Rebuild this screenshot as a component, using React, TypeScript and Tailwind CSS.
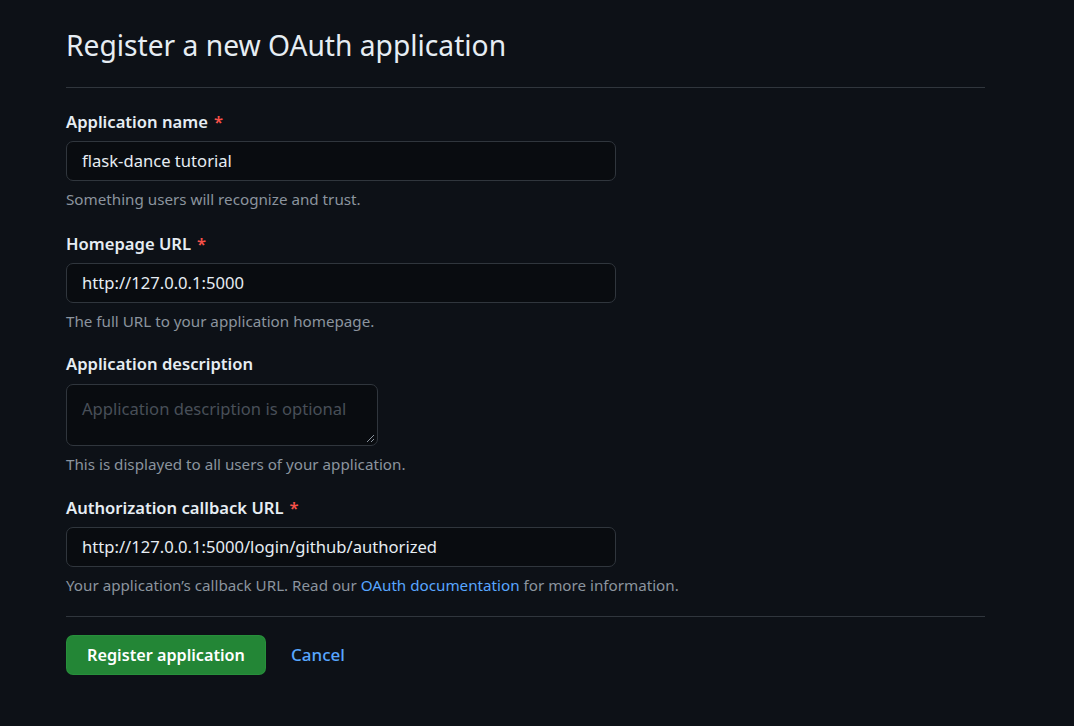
import React from "react";

const font = { fontFamily: '"Noto Sans", "Segoe UI", sans-serif' };

function Label({ text, required }: { text: string; required?: boolean }) {
  return (
    <div className="h-[20px] flex items-center text-[16.6px] font-semibold text-[#e6edf3]">
      {text}
      {required && <span className="ml-[6px] text-[#f85149]">*</span>}
    </div>
  );
}

function Note({ children }: { children: React.ReactNode }) {
  return (
    <div className="mt-[9px] h-[18px] flex items-center text-[15.2px] text-[#8b949e]">
      {children}
    </div>
  );
}

function TextInput({ value }: { value: string }) {
  return (
    <div className="mt-[9px] h-[40px] w-[550px] rounded-[7px] border border-[#30363d] bg-[#090c10] px-[15px] flex items-center text-[16.6px] text-[#e6edf3]">
      {value}
    </div>
  );
}

export default function App() {
  return (
    <div className="min-h-[726px] w-full bg-[#0d1117]" style={font}>
      <div className="pl-[66px] w-[985px]">
        <div className="pt-[25px] pb-[22px] border-b border-[#30363d]">
          <h1 className="h-[40px] flex items-center text-[28.2px] font-normal text-[#e6edf3]">
            Register a new OAuth application
          </h1>
        </div>

        <div className="pt-[24px]">
          <Label text="Application name" required />
          <TextInput value="flask-dance tutorial" />
          <Note>Something users will recognize and trust.</Note>
        </div>

        <div className="pt-[26px]">
          <Label text="Homepage URL" required />
          <TextInput value="http://127.0.0.1:5000" />
          <Note>The full URL to your application homepage.</Note>
        </div>

        <div className="pt-[24px]">
          <Label text="Application description" />
          <div className="relative mt-[10px] h-[62px] w-[312px] rounded-[7px] border border-[#30363d] bg-[#090c10] px-[15px] pt-[12px] text-[16.6px] text-[#484f58]">
            Application description is optional
            <svg className="absolute right-[2px] bottom-[2px]" width="9" height="9" viewBox="0 0 9 9">
              <line x1="1" y1="8" x2="8" y2="1" stroke="#8b949e" strokeWidth="1" />
              <line x1="5" y1="8" x2="8" y2="5" stroke="#8b949e" strokeWidth="1" />
            </svg>
          </div>
          <Note>This is displayed to all users of your application.</Note>
        </div>

        <div className="pt-[25px]">
          <Label text="Authorization callback URL" required />
          <TextInput value="http://127.0.0.1:5000/login/github/authorized" />
          <Note>
            Your application’s callback URL. Read our&nbsp;
            <span className="text-[#58a6ff]">OAuth documentation</span>&nbsp;for more information.
          </Note>
        </div>

        <div className="mt-[22px] border-t border-[#30363d] pt-[18px] flex items-center">
          <button className="h-[40px] w-[200px] rounded-[7px] border border-[#2ea043]/40 bg-[#238636] text-[16.2px] font-semibold text-white">
            Register application
          </button>
          <span className="ml-[25px] text-[17px] font-medium text-[#58a6ff]">Cancel</span>
        </div>
      </div>
    </div>
  );
}
